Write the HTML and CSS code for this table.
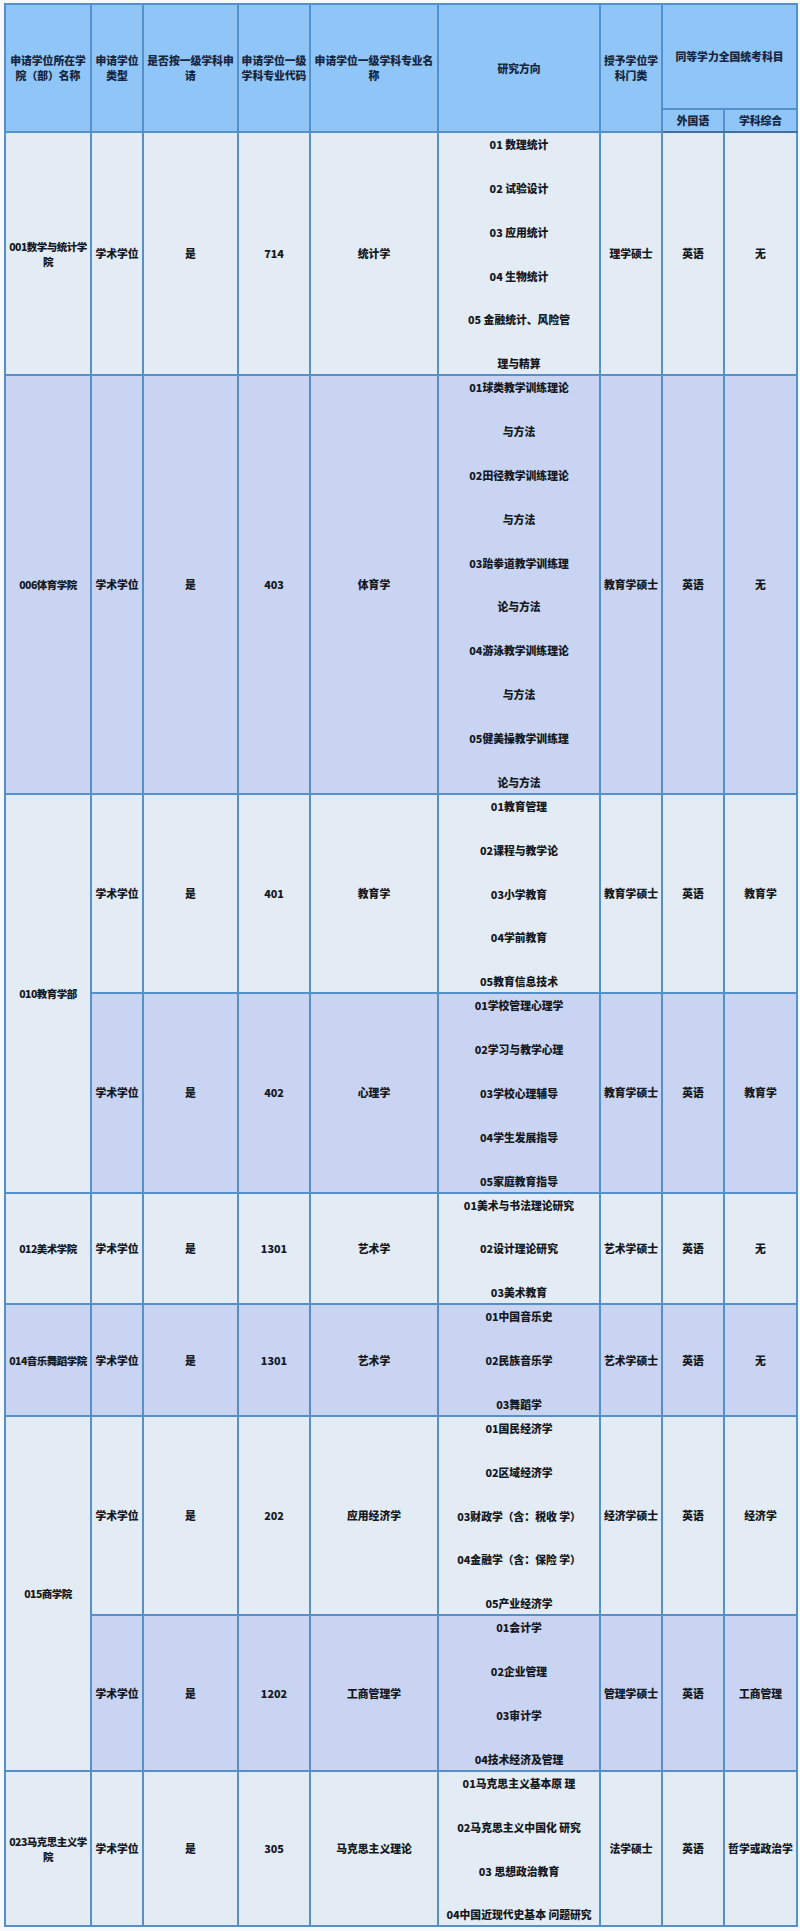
FILE: index.html
```html
<!DOCTYPE html>
<html lang="zh">
<head>
<meta charset="utf-8">
<title>同等学力申请学位一览</title>
<link rel="stylesheet" href="styles.css">
</head>
<body>
<table class="grid">
  <colgroup>
    <col class="c1"><col class="c2"><col class="c3"><col class="c4"><col class="c5">
    <col class="c6"><col class="c7"><col class="c8"><col class="c9">
  </colgroup>
  <thead>
    <tr class="hr1">
      <th rowspan="2">申请学位所在学<br>院（部）名称</th>
      <th rowspan="2">申请学位<br>类型</th>
      <th rowspan="2">是否按一级学科申<br>请</th>
      <th rowspan="2">申请学位一级<br>学科专业代码</th>
      <th rowspan="2">申请学位一级学科专业名<br>称</th>
      <th rowspan="2">研究方向</th>
      <th rowspan="2">授予学位学<br>科门类</th>
      <th colspan="2">同等学力全国统考科目</th>
    </tr>
    <tr class="hr2">
      <th>外国语</th>
      <th>学科综合</th>
    </tr>
  </thead>
  <tbody>
    <tr class="light">
      <td class="unit">001数学与统计学<br>院</td>
      <td>学术学位</td>
      <td>是</td>
      <td>714</td>
      <td>统计学</td>
      <td class="dir"><div class="lines"><span>01 数理统计</span><span>02 试验设计</span><span>03 应用统计</span><span>04 生物统计</span><span>05 金融统计、风险管</span><span>理与精算</span></div></td>
      <td>理学硕士</td>
      <td>英语</td>
      <td>无</td>
    </tr>
    <tr class="dark">
      <td class="unit">006体育学院</td>
      <td>学术学位</td>
      <td>是</td>
      <td>403</td>
      <td>体育学</td>
      <td class="dir"><div class="lines"><span>01球类教学训练理论</span><span>与方法</span><span>02田径教学训练理论</span><span>与方法</span><span>03跆拳道教学训练理</span><span>论与方法</span><span>04游泳教学训练理论</span><span>与方法</span><span>05健美操教学训练理</span><span>论与方法</span></div></td>
      <td>教育学硕士</td>
      <td>英语</td>
      <td>无</td>
    </tr>
    <tr class="light">
      <td rowspan="2" class="unit lightcell">010教育学部</td>
      <td>学术学位</td>
      <td>是</td>
      <td>401</td>
      <td>教育学</td>
      <td class="dir"><div class="lines"><span>01教育管理</span><span>02课程与教学论</span><span>03小学教育</span><span>04学前教育</span><span>05教育信息技术</span></div></td>
      <td>教育学硕士</td>
      <td>英语</td>
      <td>教育学</td>
    </tr>
    <tr class="dark">
      <td>学术学位</td>
      <td>是</td>
      <td>402</td>
      <td>心理学</td>
      <td class="dir"><div class="lines"><span>01学校管理心理学</span><span>02学习与教学心理</span><span>03学校心理辅导</span><span>04学生发展指导</span><span>05家庭教育指导</span></div></td>
      <td>教育学硕士</td>
      <td>英语</td>
      <td>教育学</td>
    </tr>
    <tr class="light">
      <td class="unit">012美术学院</td>
      <td>学术学位</td>
      <td>是</td>
      <td>1301</td>
      <td>艺术学</td>
      <td class="dir"><div class="lines"><span>01美术与书法理论研究</span><span>02设计理论研究</span><span>03美术教育</span></div></td>
      <td>艺术学硕士</td>
      <td>英语</td>
      <td>无</td>
    </tr>
    <tr class="dark">
      <td class="unit">014音乐舞蹈学院</td>
      <td>学术学位</td>
      <td>是</td>
      <td>1301</td>
      <td>艺术学</td>
      <td class="dir"><div class="lines"><span>01中国音乐史</span><span>02民族音乐学</span><span>03舞蹈学</span></div></td>
      <td>艺术学硕士</td>
      <td>英语</td>
      <td>无</td>
    </tr>
    <tr class="light">
      <td rowspan="2" class="unit lightcell">015商学院</td>
      <td>学术学位</td>
      <td>是</td>
      <td>202</td>
      <td>应用经济学</td>
      <td class="dir"><div class="lines"><span>01国民经济学</span><span>02区域经济学</span><span>03财政学（含：税收 学）</span><span>04金融学（含：保险 学）</span><span>05产业经济学</span></div></td>
      <td>经济学硕士</td>
      <td>英语</td>
      <td>经济学</td>
    </tr>
    <tr class="dark">
      <td>学术学位</td>
      <td>是</td>
      <td>1202</td>
      <td>工商管理学</td>
      <td class="dir"><div class="lines"><span>01会计学</span><span>02企业管理</span><span>03审计学</span><span>04技术经济及管理</span></div></td>
      <td>管理学硕士</td>
      <td>英语</td>
      <td>工商管理</td>
    </tr>
    <tr class="light">
      <td class="unit">023马克思主义学<br>院</td>
      <td>学术学位</td>
      <td>是</td>
      <td>305</td>
      <td>马克思主义理论</td>
      <td class="dir"><div class="lines"><span>01马克思主义基本原 理</span><span>02马克思主义中国化 研究</span><span>03 思想政治教育</span><span>04中国近现代史基本 问题研究</span></div></td>
      <td>法学硕士</td>
      <td>英语</td>
      <td>哲学或政治学</td>
    </tr>
  </tbody>
</table>
</body>
</html>
```

FILE: styles.css
```css
html, body {
  margin: 0;
  padding: 0;
  background: #f7f9fc;
}
body {
  padding: 3px 4px 0 4px;
  font-family: "Noto Sans CJK SC", "Noto Sans", sans-serif;
  font-size: 10.8px;
  font-weight: 900;
  color: #15191f;
}
.grid {
  width: 792px;
  table-layout: fixed;
  border-collapse: collapse;
  border: 2px solid #6aa6db;
}
.c1 { width: 86px; }
.c2 { width: 52px; }
.c3 { width: 95px; }
.c4 { width: 72px; }
.c5 { width: 128px; }
.c6 { width: 162px; }
.c7 { width: 62px; }
.c8 { width: 62px; }
.c9 { width: 73px; }

th, td {
  border: 2px solid #5490c9;
  padding: 0 2px;
  text-align: center;
  vertical-align: middle;
  line-height: 15px;
  white-space: nowrap;
  overflow: hidden;
}
th {
  background: #8fc5f7;
  color: #172640;
  font-weight: 900;
}
thead tr.hr2 th {
  border-bottom-color: #43709e;
}
.hr1 { height: 105px; }
.hr2 { height: 23px; }

tr.light td { background: #e3ebf5; }
tr.dark td { background: #c8d4f1; }
tr td.lightcell { background: #e3ebf5; }

td.unit {
  padding: 0;
  font-size: 10.5px;
  letter-spacing: -0.5px;
}

td.dir {
  padding: 0 2px;
}
.lines {
  display: flex;
  flex-direction: column;
  align-items: center;
  gap: 21.85px;
}
.lines span {
  display: block;
  line-height: 22px;
  height: 22px;
}
```
